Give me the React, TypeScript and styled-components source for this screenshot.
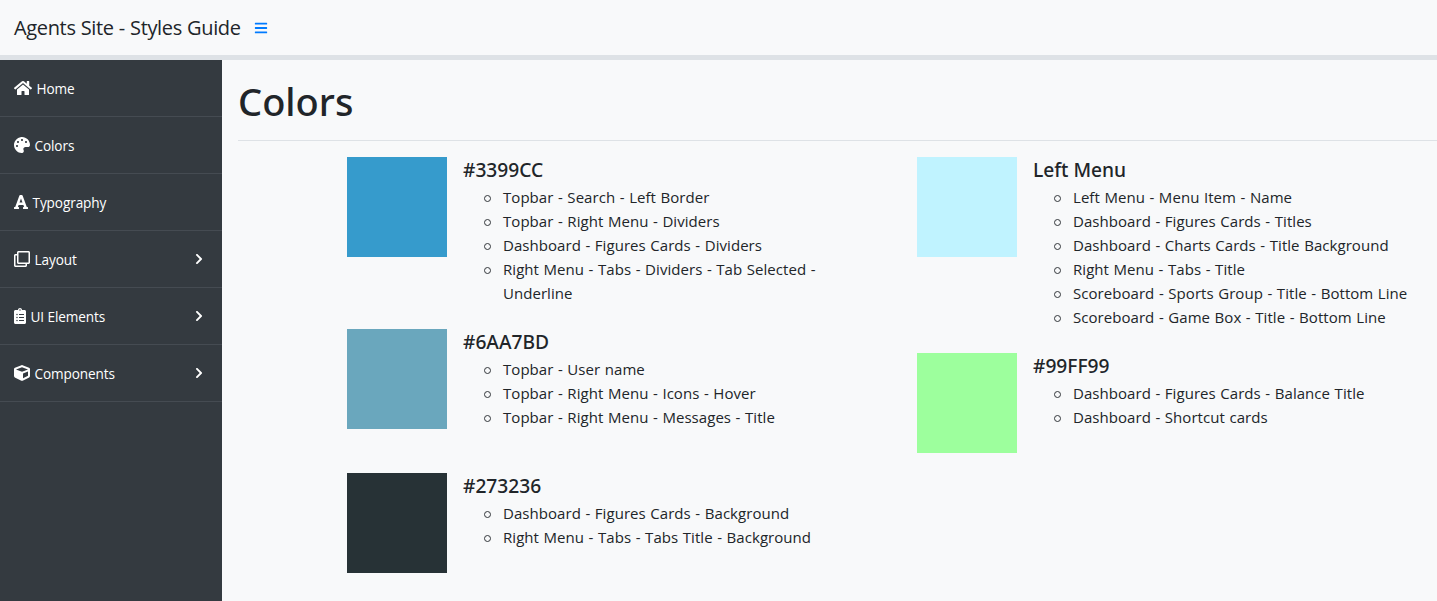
import styled, { createGlobalStyle } from "styled-components";
import { FaBars, FaChevronRight, FaClipboardList, FaCube, FaFont, FaHome, FaPalette, FaRegClone } from "react-icons/fa";

const GlobalStyle = createGlobalStyle`
    html, body {
        margin: 0;
        height: 100%;
        overflow: hidden;
        background-color: #f8f9fa;
        font-family: "Open Sans", "Noto Sans", "Liberation Sans", sans-serif;
        color: #212529;
    }
`;

const Page = styled.div`
    display: flex;
    flex-direction: column;
    height: 601px;
`;

const Topbar = styled.header`
    height: 55px;
    flex-shrink: 0;
    display: flex;
    align-items: center;
    padding-left: 14px;
    background-color: #f8f9fa;
    border-bottom: 5px solid #dee2e6;
`;

const Brand = styled.span`
    font-size: 20px;
    letter-spacing: -0.35px;
    word-spacing: 0.3px;
    color: #212529;
`;

const MenuToggle = styled.span`
    display: flex;
    margin-left: 13px;
    font-size: 14px;
    color: #007bff;
`;

const Body = styled.div`
    display: flex;
    flex: 1;
    min-height: 0;
`;

const Sidebar = styled.nav`
    width: 222px;
    flex-shrink: 0;
    background-color: #343a40;
`;

const MenuItem = styled.a`
    height: 56px;
    display: flex;
    align-items: center;
    gap: 4.5px;
    padding: 0 17px 0 14px;
    border-bottom: 1px solid #454b52;
    color: #fff;
    font-size: 13.6px;
    letter-spacing: -0.1px;
`;

const MenuIcon = styled.span<{ $width: number }>`
    display: flex;
    svg {
        width: ${(props) => props.$width}px;
        height: 16px;
    }
`;

const MenuLabel = styled.span`
    padding-top: 1px;
`;

const Chevron = styled.span`
    display: flex;
    margin-left: auto;
    font-size: 12px;
`;

const Main = styled.main`
    flex: 1;
    min-width: 0;
    padding: 0 0 0 16px;
`;

const Title = styled.h1`
    margin: 0;
    height: 81px;
    padding-top: 2px;
    box-sizing: border-box;
    display: flex;
    align-items: center;
    font-family: "Noto Sans", "Open Sans", sans-serif;
    font-size: 38px;
    font-weight: 500;
    border-bottom: 1px solid #dee2e6;
`;

const Columns = styled.div`
    display: flex;
    padding: 16px 0 0 109px;
`;

const Column = styled.div`
    width: 570px;
    flex-shrink: 0;
`;

const ColorRow = styled.section`
    display: flex;
    min-height: 120px;
    margin-bottom: 24px;
`;

const Swatch = styled.div<{ $color: string }>`
    width: 100px;
    height: 100px;
    flex-shrink: 0;
    margin-right: 16px;
    background-color: ${(props) => props.$color};
`;

const ColorName = styled.h5`
    margin: 0 0 2px;
    font-family: "Noto Sans", "Open Sans", sans-serif;
    font-size: 19.2px;
    line-height: 26px;
    font-weight: 500;
`;

const Usages = styled.ul`
    margin: 0;
    padding-left: 40px;
    list-style: none;
    width: 340px;
`;

const Usage = styled.li`
    position: relative;
    font-size: 15px;
    line-height: 24px;
    letter-spacing: 0.05px;
    word-spacing: 0.6px;
    &::before {
        content: "";
        position: absolute;
        left: -19px;
        top: 10px;
        width: 7px;
        height: 7px;
        box-sizing: border-box;
        border: 1.3px solid #33373b;
        border-radius: 50%;
    }
`;

const menu = [
    { label: "Home", icon: <FaHome />, width: 18 },
    { label: "Colors", icon: <FaPalette />, width: 16 },
    { label: "Typography", icon: <FaFont />, width: 14 },
    { label: "Layout", icon: <FaRegClone />, width: 16, more: true },
    { label: "UI Elements", icon: <FaClipboardList />, width: 12, more: true },
    { label: "Components", icon: <FaCube />, width: 16, more: true },
];

const leftColors = [
    {
        name: "#3399CC",
        color: "#369bcc",
        usages: [
            "Topbar - Search - Left Border",
            "Topbar - Right Menu - Dividers",
            "Dashboard - Figures Cards - Dividers",
            "Right Menu - Tabs - Dividers - Tab Selected - Underline",
        ],
    },
    {
        name: "#6AA7BD",
        color: "#6aa7bd",
        usages: ["Topbar - User name", "Topbar - Right Menu - Icons - Hover", "Topbar - Right Menu - Messages - Title"],
    },
    {
        name: "#273236",
        color: "#273236",
        usages: ["Dashboard - Figures Cards - Background", "Right Menu - Tabs - Tabs Title - Background"],
    },
];

const rightColors = [
    {
        name: "Left Menu",
        color: "#c0f3ff",
        usages: [
            "Left Menu - Menu Item - Name",
            "Dashboard - Figures Cards - Titles",
            "Dashboard - Charts Cards - Title Background",
            "Right Menu - Tabs - Title",
            "Scoreboard - Sports Group - Title - Bottom Line",
            "Scoreboard - Game Box - Title - Bottom Line",
        ],
    },
    {
        name: "#99FF99",
        color: "#9dff9d",
        usages: ["Dashboard - Figures Cards - Balance Title", "Dashboard - Shortcut cards"],
    },
];

const renderColors = (colors: typeof leftColors) =>
    colors.map((item) => (
        <ColorRow key={item.name}>
            <Swatch $color={item.color} />
            <div>
                <ColorName>{item.name}</ColorName>
                <Usages>
                    {item.usages.map((usage) => (
                        <Usage key={usage}>{usage}</Usage>
                    ))}
                </Usages>
            </div>
        </ColorRow>
    ));

const App = () => {
    return (
        <Page>
            <GlobalStyle />
            <Topbar>
                <Brand>Agents Site - Styles Guide</Brand>
                <MenuToggle>
                    <FaBars />
                </MenuToggle>
            </Topbar>
            <Body>
                <Sidebar>
                    {menu.map((item) => (
                        <MenuItem key={item.label}>
                            <MenuIcon $width={item.width}>{item.icon}</MenuIcon>
                            <MenuLabel>{item.label}</MenuLabel>
                            {item.more && (
                                <Chevron>
                                    <FaChevronRight />
                                </Chevron>
                            )}
                        </MenuItem>
                    ))}
                </Sidebar>
                <Main>
                    <Title>Colors</Title>
                    <Columns>
                        <Column>{renderColors(leftColors)}</Column>
                        <Column>{renderColors(rightColors)}</Column>
                    </Columns>
                </Main>
            </Body>
        </Page>
    );
};

export default App;
